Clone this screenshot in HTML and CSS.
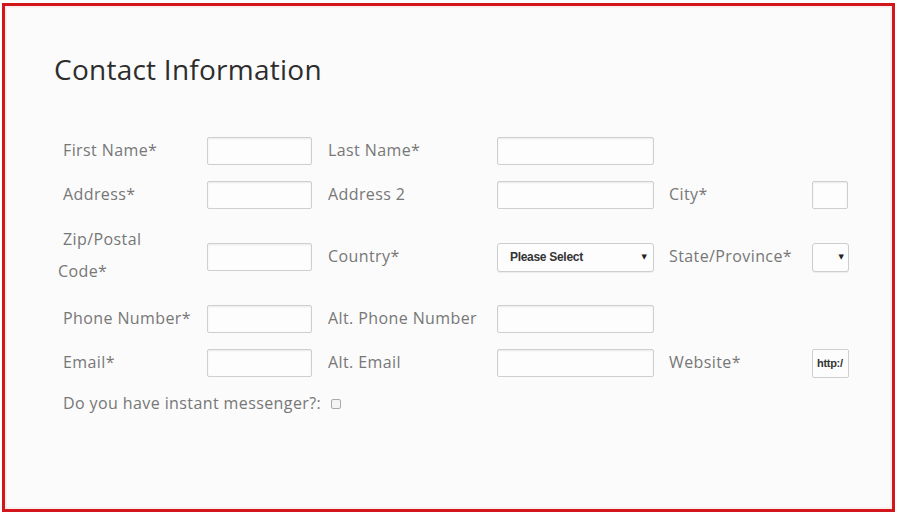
FILE: index.html
```html
<!DOCTYPE html>
<html>
<head>
<meta charset="utf-8">
<link rel="stylesheet" href="styles.css">
</head>
<body>
<div class="frame">
  <h1 class="title">Contact Information</h1>
  <form class="form">
    <label class="lbl lbl1">First Name*</label>
    <input class="in in1" type="text">
    <label class="lbl">Last Name*</label>
    <input class="in in2" type="text">
    <span></span><span></span>

    <label class="lbl lbl1">Address*</label>
    <input class="in in1" type="text">
    <label class="lbl">Address 2</label>
    <input class="in in2" type="text">
    <label class="lbl">City*</label>
    <input class="in in3" type="text">

    <label class="lbl lbl1 tall">Zip/Postal Code*</label>
    <input class="in in1" type="text">
    <label class="lbl">Country*</label>
    <div class="sel sel2"><span class="sel-text">Please Select</span><span class="arrow">▼</span></div>
    <label class="lbl">State/Province*</label>
    <div class="sel sel3"><span class="arrow">▼</span></div>

    <label class="lbl lbl1">Phone Number*</label>
    <input class="in in1" type="text">
    <label class="lbl">Alt. Phone Number</label>
    <input class="in in2" type="text">
    <span></span><span></span>

    <label class="lbl lbl1">Email*</label>
    <input class="in in1" type="text">
    <label class="lbl">Alt. Email</label>
    <input class="in in2" type="text">
    <label class="lbl">Website*</label>
    <div class="url">http:/</div>

    <div class="im">Do you have instant messenger?: <span class="cb"></span></div>
  </form>
</div>
</body>
</html>
```
FILE: styles.css
```css
html, body {
  margin: 0;
  padding: 0;
  background: #ffffff;
}
body {
  padding: 3px 5px 6px 2px;
  font-family: "Open Sans", "Liberation Sans", sans-serif;
}
.frame {
  box-sizing: border-box;
  width: 893px;
  height: 509px;
  border: 3px solid #d3161b;
  background: #fbfbfb;
  box-shadow: inset 0 0 0 2px #fbeeee;
  padding: 0 0 0 53px;
}
.title {
  margin: 0 0 0 -4px;
  padding-top: 44px;
  height: 87px;
  box-sizing: border-box;
  font-weight: 400;
  font-size: 28px;
  line-height: 38px;
  color: #2d2d2d;
  letter-spacing: 0.25px;
}
.form {
  margin-top: 44px;
  display: grid;
  grid-template-columns: 149px 121px 169px 172px 143px 40px;
  grid-template-rows: 28px 28px 64px 28px 28px 28px;
  row-gap: 16px;
  align-items: center;
}
.lbl {
  font-size: 16px;
  color: #777777;
  line-height: 20px;
  white-space: nowrap;
  letter-spacing: 0.4px;
  margin-top: -3px;
}
.lbl1 {
  text-indent: 5px;
}
.lbl.tall {
  white-space: normal;
  line-height: 32px;
  width: 110px;
  margin-top: -4px;
}
.in {
  box-sizing: border-box;
  height: 28px;
  margin: 0;
  padding: 0;
  border: 1px solid #cfcfcf;
  border-radius: 2px;
  background: #fdfdfd;
  box-shadow: inset 0 1px 2px rgba(0,0,0,0.08);
}
.in1 { width: 105px; }
.in2 { width: 157px; }
.in3 { width: 36px; }
.sel {
  box-sizing: border-box;
  height: 29px;
  border: 1px solid #cdcdcd;
  border-radius: 3px;
  background: #fdfdfd;
  display: flex;
  align-items: center;
  justify-content: space-between;
  box-shadow: 0 1px 1px rgba(0,0,0,0.06);
}
.sel2 { width: 157px; padding: 0 6px 0 12px; }
.sel3 { width: 37px; padding: 0 4px 0 0; justify-content: flex-end; }
.sel-text {
  font-family: "Liberation Sans", Arial, sans-serif;
  font-weight: 700;
  font-size: 12px;
  color: #333;
  letter-spacing: -0.3px;
}
.arrow {
  font-family: "DejaVu Sans", sans-serif;
  font-size: 7px;
  color: #222;
}
.url {
  box-sizing: border-box;
  width: 37px;
  height: 29px;
  border: 1px solid #cfcfcf;
  border-radius: 2px;
  background: #fdfdfd;
  font-family: "Liberation Sans", Arial, sans-serif;
  font-weight: 700;
  font-size: 11px;
  color: #333;
  display: flex;
  align-items: center;
  padding-left: 4px;
  overflow: hidden;
  white-space: nowrap;
  letter-spacing: -0.3px;
}
.im {
  grid-column: 1 / 5;
  font-size: 16px;
  letter-spacing: 0.4px;
  color: #777777;
  padding-left: 5px;
  display: flex;
  align-items: center;
  gap: 10px;
  margin-top: -9px;
}
.cb {
  display: inline-block;
  width: 8px;
  height: 8px;
  border: 1px solid #aaa;
  border-radius: 2px;
  background: #f4f4f4;
  margin-top: 2px;
}
```
